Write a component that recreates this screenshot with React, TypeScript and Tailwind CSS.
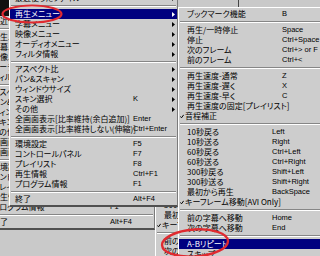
import React from 'react';

type Item =
  | { t: string; k?: string; sub?: boolean; chk?: boolean; hi?: boolean; near?: boolean }
  | { sep: number };

const leftItems: Item[] = [
  { t: '最近使ったファイル', sub: true },
  { sep: 6 },
  { t: '再生メニュー', sub: true, hi: true },
  { t: '字幕メニュー', sub: true },
  { t: '映像メニュー', sub: true },
  { t: 'オーディオメニュー', sub: true },
  { t: 'フィルタ情報', sub: true },
  { sep: 5 },
  { t: 'アスペクト比', sub: true },
  { t: 'パン&スキャン', sub: true },
  { t: 'ウィンドウサイズ', sub: true },
  { t: 'スキン選択', k: 'K', sub: true },
  { t: 'その他', sub: true },
  { t: '全画面表示[比率維持(余白追加)]', k: 'Enter' },
  { t: '全画面表示[比率維持しない(伸縮)]', k: 'Ctrl+Enter' },
  { sep: 5 },
  { t: '環境設定', k: 'F5' },
  { t: 'コントロールパネル', k: 'F7' },
  { t: 'プレイリスト', k: 'F8' },
  { t: '再生情報', k: 'Ctrl+F1' },
  { t: 'プログラム情報', k: 'F1' },
  { sep: 5 },
  { t: '終了', k: 'Alt+F4' },
];

const subItems: Item[] = [
  { t: 'ブックマーク機能', k: 'B' },
  { sep: 6 },
  { t: '再生/一時停止', k: 'Space' },
  { t: '停止', k: 'Ctrl+Space' },
  { t: '次のフレーム', k: 'Ctrl+> or F' },
  { t: '前のフレーム', k: 'Ctrl+<' },
  { sep: 6 },
  { t: '再生速度-通常', k: 'Z' },
  { t: '再生速度-遅く', k: 'X' },
  { t: '再生速度-早く', k: 'C' },
  { t: '再生速度の固定[プレイリスト]' },
  { t: '音程補正', chk: true },
  { sep: 6 },
  { t: '10秒戻る', k: 'Left', near: true },
  { t: '10秒送る', k: 'Right', near: true },
  { t: '60秒戻る', k: 'Ctrl+Left', near: true },
  { t: '60秒送る', k: 'Ctrl+Right', near: true },
  { t: '300秒戻る', k: 'Shift+Left', near: true },
  { t: '300秒送る', k: 'Shift+Right', near: true },
  { t: '最初から再生', k: 'BackSpace', near: true },
  { t: 'キーフレーム移動[AVI Only]', chk: true },
  { sep: 6 },
  { t: '前の字幕へ移動', k: 'Home', near: true },
  { t: '次の字幕へ移動', k: 'End', near: true },
  { sep: 6 },
  { t: 'A-Bリピート', hi: true },
  { t: 'スキップ' },
];

const jp = "font-['Noto_Sans_CJK_JP',sans-serif] text-[8px] leading-[10px] [font-feature-settings:'palt']";
const en = "font-['Liberation_Sans',Arial,sans-serif] text-[7.5px] leading-[10px]";

const Sep = ({ h }: { h: number }) => (
  <div className={`flex flex-col justify-center px-[1px] ${h === 6 ? 'h-[6px]' : 'h-[5px]'}`}>
    <div className="h-px bg-[#868686]" />
    <div className="h-px bg-white" />
  </div>
);

const Arrow = ({ light }: { light: boolean }) => (
  <svg className="absolute right-[2px] top-[2.5px]" width="3" height="5" viewBox="0 0 3 5">
    <path d="M0 0 L3 2.5 L0 5 Z" fill={light ? '#fff' : '#000'} />
  </svg>
);

const Check = () => (
  <svg className="mr-[1px] shrink-0" width="4" height="5" viewBox="0 0 4 5">
    <path d="M0.3 2.4 L1.5 3.8 L3.7 0.8" stroke="#000" strokeWidth="1" fill="none" />
  </svg>
);

function LeftMenu({ active }: { active: boolean }) {
  return (
    <div className="w-[169px] border-l border-r border-b-2 border-l-white border-r-[#7a7a7a] border-b-[#505050] bg-[#cdcdcd] pb-[1px]">
      {leftItems.map((it, i) => {
        if ('sep' in it) return <Sep key={i} h={it.sep} />;
        const hi = active && it.hi;
        return (
          <div key={i} className={`relative flex h-[10px] items-center ${hi ? 'bg-[#000080] text-white' : 'text-black'}`}>
            <span className={`w-[123px] shrink-0 whitespace-nowrap pl-[5px] ${jp}`}>{it.t}</span>
            {it.k && <span className={`whitespace-nowrap ${en}`}>{it.k}</span>}
            {it.sub && <Arrow light={!!hi} />}
          </div>
        );
      })}
    </div>
  );
}

function SubMenu({ active }: { active: boolean }) {
  return (
    <div className="w-[150px] border-l border-t border-l-white border-t-white bg-[#cdcdcd] pt-[1px]">
      {subItems.map((it, i) => {
        if ('sep' in it) return <Sep key={i} h={it.sep} />;
        const hi = active && it.hi;
        return (
          <div key={i} className={`flex h-[10px] items-center ${hi ? 'bg-[#000080] text-white' : 'text-black'}`}>
            <span
              className={`flex shrink-0 items-center whitespace-nowrap ${jp} ${it.near ? 'w-[93px]' : 'w-[103px]'} ${
                it.chk ? 'pl-[1px]' : 'pl-[8px]'
              }`}
            >
              {it.chk && <Check />}
              {it.t}
            </span>
            {it.k && <span className={`whitespace-nowrap ${en}`}>{it.k}</span>}
          </div>
        );
      })}
    </div>
  );
}

function Scene({ active }: { active: boolean }) {
  return (
    <>
      <div className="absolute left-[9px] top-[-7px]">
        <LeftMenu active={active} />
      </div>
      <div className="absolute left-[178px] top-[7px]">
        <SubMenu active={active} />
      </div>
    </>
  );
}

export default function App() {
  return (
    <div className="relative h-[256px] w-[320px] overflow-hidden bg-[#c9c9c9]">
      {/* earlier capture, pasted underneath */}
      <div className="absolute left-[-23px] top-[23px] h-[256px] w-[320px]">
        <Scene active={false} />
      </div>
      <div className="absolute left-0 top-0 h-[16px] w-[9px] bg-[#111]" />
      <div className="absolute left-[238px] top-0 h-[7px] w-px bg-[#444]" />
      <div className="absolute inset-0">
        <Scene active={true} />
      </div>
      <svg className="pointer-events-none absolute inset-0" width="320" height="256" viewBox="0 0 320 256">
        <ellipse cx="32" cy="14" rx="29.5" ry="8.5" fill="none" stroke="#e02a30" strokeWidth="2.2" />
        <ellipse cx="195" cy="243" rx="33" ry="13.5" fill="none" stroke="#e02a30" strokeWidth="2.4" transform="rotate(-4 195 243)" />
      </svg>
    </div>
  );
}
